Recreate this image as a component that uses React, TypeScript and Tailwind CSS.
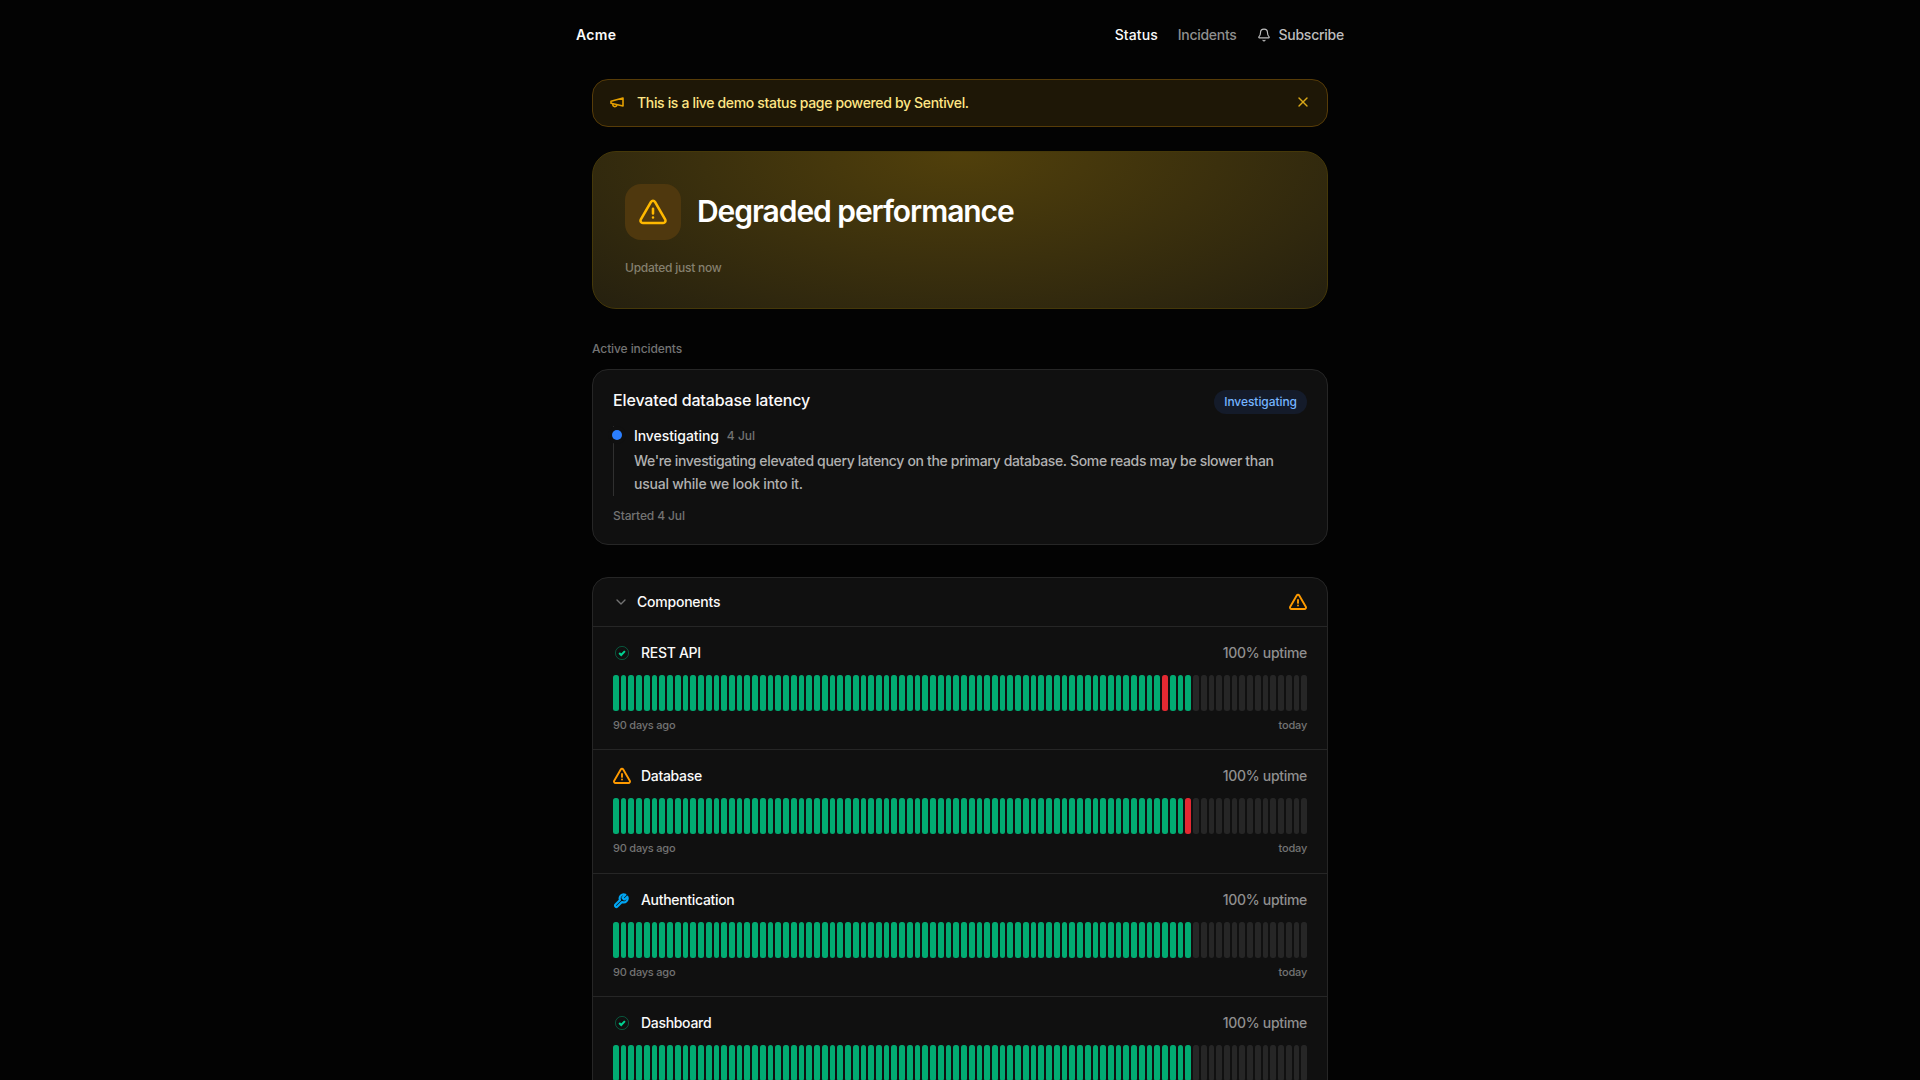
import React from 'react';
import { Bell, ChevronDown, X } from 'lucide-react';

type Status = 'operational' | 'degraded' | 'maintenance';

interface ComponentItem {
  name: string;
  status: Status;
  downDays: number[];
}

const TOTAL_DAYS = 90;
const TRACKED_DAYS = 75;

const components: ComponentItem[] = [
  { name: 'REST API', status: 'operational', downDays: [71] },
  { name: 'Database', status: 'degraded', downDays: [74] },
  { name: 'Authentication', status: 'maintenance', downDays: [] },
  { name: 'Dashboard', status: 'operational', downDays: [] },
];

function WarningIcon({ className, strokeWidth = 2.2 }: { className?: string; strokeWidth?: number }) {
  return (
    <svg viewBox="0 0 24 24" fill="none" stroke="currentColor" strokeWidth={strokeWidth} strokeLinecap="round" strokeLinejoin="round" className={className}>
      <path d="M10.3 3.3 1.6 18.4A2 2 0 0 0 3.3 21.4h17.4a2 2 0 0 0 1.7-3L13.7 3.3a2 2 0 0 0-3.4 0Z" />
      <path d="M12 9.2v4M12 16.7h.01" />
    </svg>
  );
}

function MegaphoneIcon({ className }: { className?: string }) {
  return (
    <svg viewBox="0 0 24 24" fill="none" stroke="currentColor" strokeWidth={2.4} strokeLinecap="round" strokeLinejoin="round" className={className}>
      <path d="m3 11 18-5v12L3 14v-3z" />
      <path d="M11.6 16.8a3 3 0 1 1-5.8-1.6" />
    </svg>
  );
}

function StatusIcon({ status }: { status: Status }) {
  if (status === 'degraded') return <WarningIcon strokeWidth={2.5} className="size-[18px] text-[#fe9a00]" />;
  if (status === 'maintenance') {
    return (
      <svg viewBox="0 0 24 24" fill="none" stroke="currentColor" strokeWidth={3.2} strokeLinecap="round" strokeLinejoin="round" className="mt-0.5 mr-0.5 size-4 text-[#00a6f4]">
        <path d="M14.7 6.3a1 1 0 0 0 0 1.4l1.6 1.6a1 1 0 0 0 1.4 0l3.77-3.77a6 6 0 0 1-7.94 7.94l-6.91 6.91a2.12 2.12 0 0 1-3-3l6.91-6.91a6 6 0 0 1 7.94-7.94l-3.76 3.76z" />
      </svg>
    );
  }
  return (
    <svg viewBox="0 0 18 18" fill="none" className="size-[18px]">
      <circle cx="9" cy="9" r="6.6" stroke="#00bc7d" strokeOpacity="0.4" />
      <path d="m6.2 9 2 2 3.7-3.9" stroke="#00d492" strokeWidth="2" />
    </svg>
  );
}

function UptimeRow({ item }: { item: ComponentItem }) {
  return (
    <div className="border-b border-[#262626] px-5 py-4">
      <div className="flex h-5 items-center justify-between text-sm tracking-[-0.31px]">
        <div className="flex items-center gap-2.5">
          <StatusIcon status={item.status} />
          <span className="text-[#fafafa]">{item.name}</span>
        </div>
        <span className="text-[#8f8f8f]">100% uptime</span>
      </div>
      <div className="mt-3 flex h-9 gap-[2px]">
        {Array.from({ length: TOTAL_DAYS }, (_, i) => (
          <div
            key={i}
            className={`flex-1 rounded-[2.5px] ${
              i >= TRACKED_DAYS ? 'bg-[#262626]' : item.downDays.includes(i) ? 'bg-[#e42932]' : 'bg-[#02ab72]'
            }`}
          />
        ))}
      </div>
      <div className="mt-1.5 flex justify-between text-[11px] leading-[16.33px] tracking-[-0.22px] text-[#737373]">
        <span>90 days ago</span>
        <span>today</span>
      </div>
    </div>
  );
}

export default function App() {
  return (
    <div className="h-[1080px] w-full overflow-hidden bg-[#030303] font-['Inter',sans-serif] font-[450]">
      <div className="mx-auto w-[768px]">
        <header className="flex h-[79px] items-start justify-between pt-[25px] text-sm">
          <span className="font-semibold tracking-[0.3px] text-[#fafafa]">Acme</span>
          <nav className="flex items-center gap-5">
            <a className="font-medium tracking-[0.1px] text-[#fafafa]">Status</a>
            <a className="tracking-[-0.3px] text-[#8f8f8f]">Incidents</a>
            <button className="flex items-center gap-2 font-medium tracking-[-0.25px] text-[#bdbdbd]">
              <Bell size={14} />
              <span>Subscribe</span>
            </button>
          </nav>
        </header>

        <main className="px-4">
          <div className="flex h-12 items-center rounded-2xl border border-[#573c08] bg-[#1e1706] px-4">
            <MegaphoneIcon className="mb-0.5 size-4 text-[#e5a000]" />
            <p className="ml-3 text-sm tracking-[-0.34px] text-[#fee685]">This is a live demo status page powered by Sentivel.</p>
            <X size={16} className="mb-0.5 ml-auto text-[#d9a818]" />
          </div>

          <section className="mt-6 h-[158px] rounded-3xl border border-[#453809] bg-[radial-gradient(ellipse_at_top,#51400b,#25200f)] p-8">
            <div className="flex items-center gap-4">
              <div className="flex size-14 items-center justify-center rounded-2xl bg-[#4f380e]">
                <WarningIcon className="size-7 text-[#ffb900]" />
              </div>
              <h1 className="mb-0.5 text-[30px] leading-9 font-semibold tracking-[-1.06px] text-white">Degraded performance</h1>
            </div>
            <p className="mt-5 text-xs tracking-[-0.24px] text-[#85806f]">Updated just now</p>
          </section>

          <h2 className="mt-8 text-xs font-medium tracking-[-0.1px] text-[#737373]">Active incidents</h2>
          <section className="mt-3 h-44 rounded-2xl border border-[#262626] bg-[#101010] p-5">
            <div className="flex items-start justify-between">
              <h3 className="text-base leading-5 font-medium tracking-[-0.13px] text-[#fafafa]">Elevated database latency</h3>
              <span className="flex h-6 items-center rounded-full bg-[#141b2a] px-2.5 text-xs font-medium tracking-[-0.06px] text-[#74b4ff]">Investigating</span>
            </div>
            <div className="relative mt-3 border-l border-[#303030] pl-5">
              <div className="absolute top-1 -left-[2px] size-2.5 rounded-full bg-[#2b7fff] ring-4 ring-[#101010]" />
              <div className="flex items-center gap-2">
                <span className="text-sm font-medium tracking-[-0.08px] text-[#fafafa]">Investigating</span>
                <span className="text-xs text-[#737373]">4 Jul</span>
              </div>
              <p className="mt-1 text-sm leading-[22.75px] tracking-[-0.34px] text-[#b0b0b0]">
                We're investigating elevated query latency on the primary database. Some reads may be slower than
                <br />
                <span className="tracking-[-0.23px]">usual while we look into it.</span>
              </p>
            </div>
            <p className="mt-3 text-xs tracking-[-0.12px] text-[#737373]">Started 4 Jul</p>
          </section>

          <section className="mt-8 rounded-2xl border border-[#262626] bg-[#101010]">
            <div className="flex h-[49px] items-center border-b border-[#262626] px-5">
              <ChevronDown size={16} className="text-[#737373]" />
              <h3 className="ml-2 text-sm font-medium tracking-[-0.22px] text-[#fafafa]">Components</h3>
              <WarningIcon strokeWidth={2.5} className="ml-auto size-[18px] text-[#fe9a00]" />
            </div>
            {components.map((item) => (
              <UptimeRow key={item.name} item={item} />
            ))}
          </section>
        </main>
      </div>
    </div>
  );
}
